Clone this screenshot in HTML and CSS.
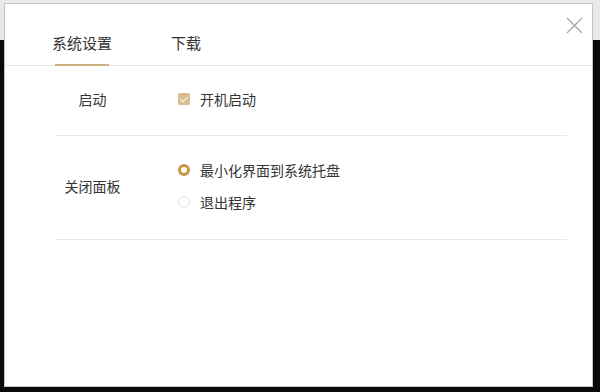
FILE: index.html
```html
<!DOCTYPE html>
<html lang="zh-CN">
<head>
    <meta charset="UTF-8">
    <title>设置</title>
    <link rel="stylesheet" href="styles.css">
</head>
<body>

    <div class="dialog">
        <div class="head">
            <div class="tab active">系统设置</div>
            <div class="tab">下载</div>
            <svg class="close" width="17" height="17" viewBox="0 0 17 17">
                <path d="M1 1 L16 16 M16 1 L1 16" stroke="#a8a8a8" stroke-width="1.4" fill="none"/>
            </svg>
        </div>

        <div class="rows">
            <div class="row start">
                <div class="name">启动</div>
                <div class="opts">
                    <label class="opt"><span class="check"></span>开机启动</label>
                </div>
            </div>
            <div class="row close-panel">
                <div class="name">关闭面板</div>
                <div class="opts">
                    <label class="opt"><span class="radio on"></span>最小化界面到系统托盘</label>
                    <label class="opt"><span class="radio"></span>退出程序</label>
                </div>
            </div>
        </div>
    </div>

</body>
</html>
```

FILE: styles.css
```css
html, body {
    margin: 0;
    height: 100%;
}
body {
    background: linear-gradient(#e9e9e9 0 40px, #0c0a08 40px);
    font-family: "Noto Sans CJK SC", "Noto Sans", sans-serif;
    color: #333;
    padding: 3px 7px 5px 4px;
    box-sizing: border-box;
}

.dialog {
    height: 100%;
    box-sizing: border-box;
    background: #fff;
    border: 1px solid #c4c4c4;
    display: flex;
    flex-direction: column;
}

.head {
    height: 61px;
    border-bottom: 1px solid #e6e6e6;
    display: flex;
    align-items: flex-end;
    padding-left: 47px;
    gap: 59px;
    position: relative;
}
.tab {
    font-size: 15px;
    line-height: 20px;
    padding-bottom: 12px;
    position: relative;
}
.tab.active::after {
    content: "";
    position: absolute;
    left: 3px;
    right: 3px;
    bottom: -1px;
    height: 2px;
    background: #cfb283;
}
.close {
    position: absolute;
    right: 9px;
    top: 13px;
}

.rows {
    margin: 0 25px 0 50px;
}
.row {
    display: flex;
    align-items: center;
    border-bottom: 1px solid #e8e8e8;
    font-size: 14px;
    line-height: 20px;
}
.row.start {
    padding: 23px 0 26px;
}
.row.close-panel {
    padding: 24px 0 27px;
}
.name {
    width: 75px;
    text-align: center;
    margin-right: 48px;
}
.opts {
    display: flex;
    flex-direction: column;
    gap: 12px;
}
.opt {
    display: flex;
    align-items: center;
    gap: 10px;
}

.check {
    width: 12px;
    height: 12px;
    border-radius: 2px;
    background: #d9bf8f;
    position: relative;
}
.check::after {
    content: "";
    position: absolute;
    left: 4px;
    top: 1.5px;
    width: 3px;
    height: 6px;
    border: solid #fff;
    border-width: 0 1.5px 1.5px 0;
    transform: rotate(45deg);
}

.radio {
    width: 12px;
    height: 12px;
    box-sizing: border-box;
    border-radius: 50%;
    border: 1px solid #e6e6e6;
}
.radio.on {
    border: 3.5px solid #c9953f;
}
```
